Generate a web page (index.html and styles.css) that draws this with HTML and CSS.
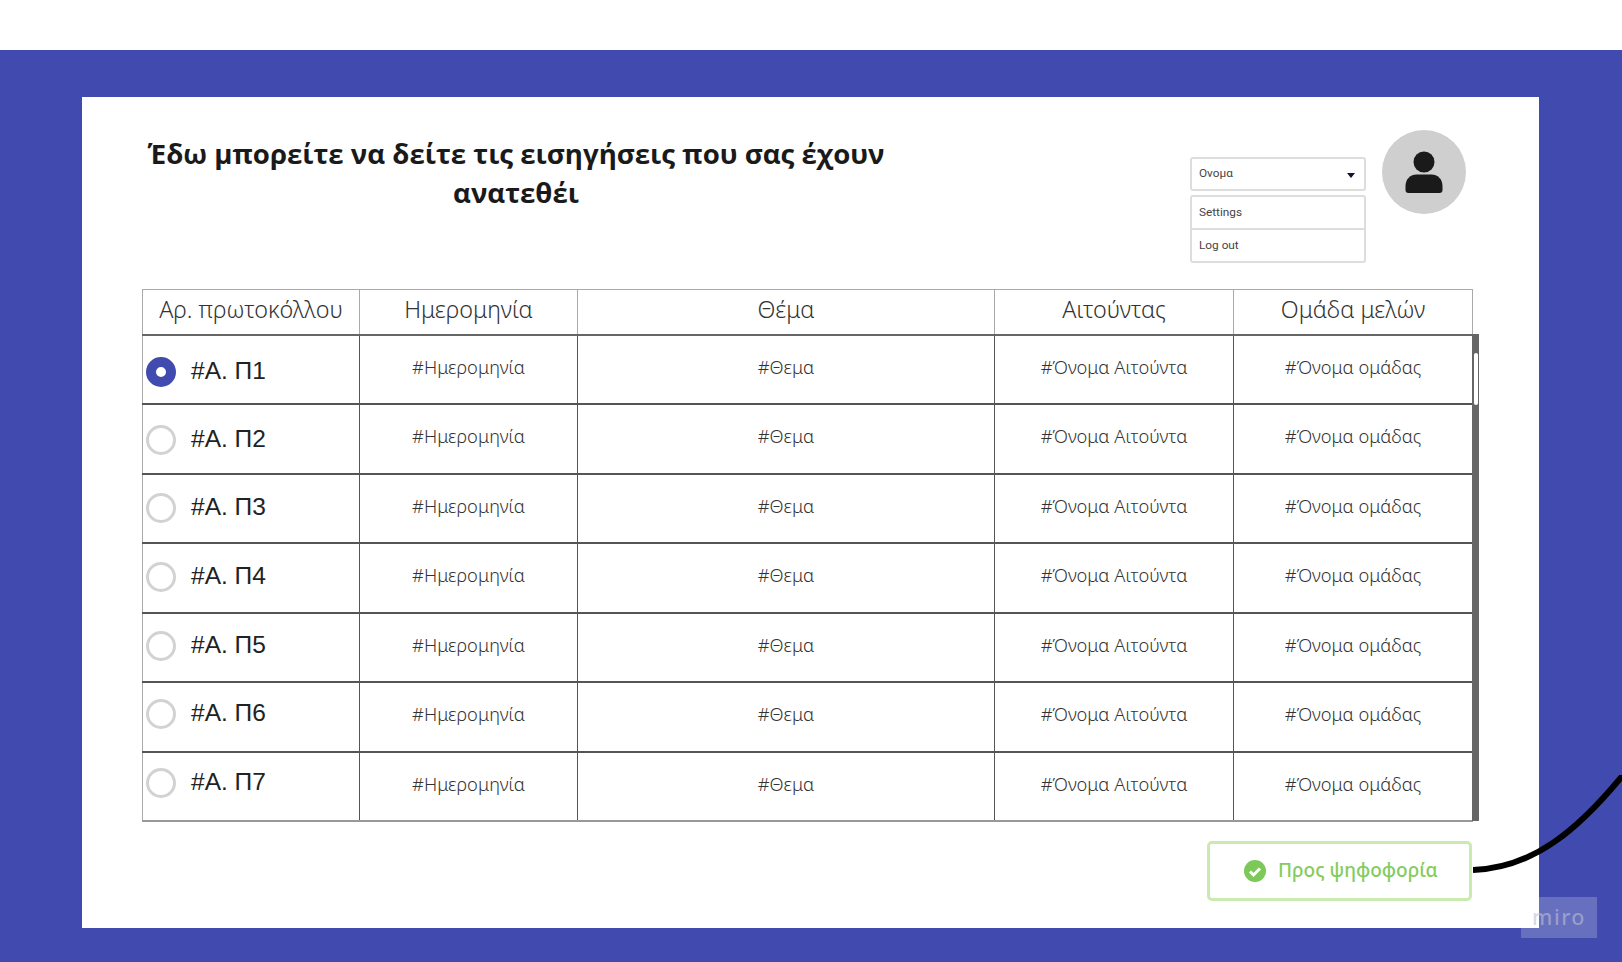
FILE: index.html
```html
<!DOCTYPE html>
<html lang="el">
<head>
<meta charset="utf-8">
<title>Εισηγήσεις</title>
<link rel="stylesheet" href="styles.css">
</head>
<body>
<div class="stage">
  <div class="panel">
    <div class="top">
      <h1 class="title">Έδω μπορείτε να δείτε τις εισηγήσεις που σας έχουν ανατεθέι</h1>
      <div class="account">
        <div class="menu">
          <div class="select"><span>Ονομα</span><i class="caret"></i></div>
          <div class="options">
            <div class="option">Settings</div>
            <div class="option">Log out</div>
          </div>
        </div>
        <div class="avatar">
          <svg width="40" height="84" viewBox="0 0 40 84">
            <circle cx="20" cy="32" r="10.5" fill="#1a1a1a"/>
            <path d="M1.500 60v-4c0-7 5-11.500 11-11.500h15c6 0 11 4.500 11 11.500v4c0 2-1 3-3 3H4.500c-2 0-3-1-3-3z" fill="#1a1a1a"/>
          </svg>
        </div>
      </div>
    </div>

    <div class="tablewrap">
      <table class="grid">
        <colgroup><col class="c1"><col class="c2"><col class="c3"><col class="c4"><col class="c5"></colgroup>
        <thead>
          <tr><th>Αρ. πρωτοκόλλου</th><th>Ημερομηνία</th><th>Θέμα</th><th>Αιτούντας</th><th>Ομάδα μελών</th></tr>
        </thead>
        <tbody>
          <tr><td class="first"><span class="radio on"></span>#Α. Π1</td><td>#Ημερομηνία</td><td>#Θεμα</td><td>#Όνομα Αιτούντα</td><td>#Όνομα ομάδας</td></tr>
          <tr><td class="first"><span class="radio"></span>#Α. Π2</td><td>#Ημερομηνία</td><td>#Θεμα</td><td>#Όνομα Αιτούντα</td><td>#Όνομα ομάδας</td></tr>
          <tr><td class="first"><span class="radio"></span>#Α. Π3</td><td>#Ημερομηνία</td><td>#Θεμα</td><td>#Όνομα Αιτούντα</td><td>#Όνομα ομάδας</td></tr>
          <tr><td class="first"><span class="radio"></span>#Α. Π4</td><td>#Ημερομηνία</td><td>#Θεμα</td><td>#Όνομα Αιτούντα</td><td>#Όνομα ομάδας</td></tr>
          <tr><td class="first"><span class="radio"></span>#Α. Π5</td><td>#Ημερομηνία</td><td>#Θεμα</td><td>#Όνομα Αιτούντα</td><td>#Όνομα ομάδας</td></tr>
          <tr><td class="first"><span class="radio"></span>#Α. Π6</td><td>#Ημερομηνία</td><td>#Θεμα</td><td>#Όνομα Αιτούντα</td><td>#Όνομα ομάδας</td></tr>
          <tr><td class="first"><span class="radio"></span>#Α. Π7</td><td>#Ημερομηνία</td><td>#Θεμα</td><td>#Όνομα Αιτούντα</td><td>#Όνομα ομάδας</td></tr>
        </tbody>
      </table>
      <div class="scrollbar"><div class="thumb"></div></div>
    </div>

    <div class="actions">
      <button class="vote">
        <svg width="22" height="22" viewBox="0 0 22 22">
          <circle cx="11" cy="11" r="11" fill="#7cc95a"/>
          <path d="M6 11.500l3.500 3.500L16 8.500" fill="none" stroke="#fff" stroke-width="3"/>
        </svg>
        <span class="vote-label">Προς ψηφοφορία</span>
      </button>
    </div>
  </div>

  <svg class="curve" width="150" height="100" viewBox="0 0 150 100">
    <path d="M0 95C60 93 105 55 150 0" fill="none" stroke="#000" stroke-width="6"/>
  </svg>
  <div class="miro">miro</div>
</div>
</body>
</html>
```

FILE: styles.css
```css
html, body { margin: 0; padding: 0; }
body {
  width: 1622px;
  height: 962px;
  overflow: hidden;
  background: #fff;
  font-family: "Noto Sans", sans-serif;
  color: #333;
}

.stage {
  position: relative;
  margin-top: 50px;
  height: 912px;
  padding: 47px 83px 0 82px;
  box-sizing: border-box;
  background: #414baf;
}

.panel {
  height: 831px;
  padding: 0 67px 0 60px;
  box-sizing: border-box;
  background: #fff;
}

.top {
  display: flex;
  justify-content: space-between;
  height: 192px;
}
.title {
  width: 748px;
  margin: 37px 0 0;
  font-family: "Open Sans", sans-serif;
  font-size: 27.600px;
  font-weight: 700;
  line-height: 39px;
  text-align: center;
  color: #1a1a1a;
}

.account { display: flex; gap: 16px; margin: 33px 6px 0 0; align-items: flex-start; }
.menu {
  width: 176px;
  margin-top: 27px;
  font-family: Roboto, sans-serif;
  font-size: 11.800px;
  color: #444;
}
.select, .options {
  border: 2px solid #ddd;
  border-radius: 3px;
  box-sizing: border-box;
}
.select {
  display: flex;
  justify-content: space-between;
  align-items: center;
  height: 34px;
  padding: 0 9px 2px 7px;
  margin-bottom: 4px;
}
.caret {
  width: 0;
  height: 0;
  margin-top: 4px;
  border-left: 4px solid transparent;
  border-right: 4px solid transparent;
  border-top: 5px solid #111133;
}
.option { height: 31px; line-height: 31px; padding-left: 7px; }
.option + .option { border-top: 2px solid #ddd; }
.avatar {
  display: flex;
  justify-content: center;
  width: 84px;
  height: 84px;
  border-radius: 50%;
  background: #cfcfcf;
}

.tablewrap { display: flex; align-items: flex-start; }
.grid {
  flex: none;
  width: 1331px;
  table-layout: fixed;
  border-collapse: collapse;
  margin-right: -1px;
}
.c1 { width: 217px; }
.c2 { width: 218px; }
.c3 { width: 417px; }
.c4 { width: 239px; }
.c5 { width: 239px; }
.grid th {
  height: 45px;
  padding: 0 0 6px;
  box-sizing: border-box;
  border: 1px solid #aaa;
  border-bottom: 2px solid #666;
  font-size: 23.300px;
  font-weight: 300;
  color: #333;
  text-align: center;
}
.grid td {
  height: 69.500px;
  padding: 0 0 6px;
  box-sizing: border-box;
  border: 1px solid #555;
  border-top-width: 2px;
  font-size: 18.300px;
  font-weight: 300;
  text-align: center;
}
.grid tbody tr:last-child td { border-bottom: 2px solid #999; }
.grid td:first-child { border-left: 1px solid #aaa; }
.grid td.first {
  padding: 0 0 0 2.500px;
  font-family: "Liberation Sans", sans-serif;
  font-size: 24.500px;
  font-weight: 400;
  color: #222;
  text-align: left;
}
/* the first column drifts up a little from row to row in the mockup */
.grid tr:nth-child(1) td.first { padding-top: 7px; }
.grid tr:nth-child(2) td.first { padding-top: 5px; }
.grid tr:nth-child(3) td.first { padding-top: 2px; }
.grid tr:nth-child(6) td.first { padding-bottom: 3px; }
.grid tr:nth-child(7) td.first { padding-bottom: 5px; }
.radio {
  display: inline-block;
  width: 30px;
  height: 30px;
  margin: 0 15.500px 2px 0;
  border: 3px solid #d2d2d2;
  border-radius: 50%;
  box-sizing: border-box;
  vertical-align: middle;
}
.radio.on { border: 10px solid #414baf; }

.scrollbar {
  flex: none;
  width: 7px;
  height: 487px;
  margin-top: 45px;
  padding-top: 19px;
  box-sizing: border-box;
  background: #666;
}
.thumb {
  width: 4px;
  height: 52px;
  margin-left: 2px;
  border-radius: 2px;
  background: #fff;
}

.actions { display: flex; justify-content: flex-end; margin-top: 19px; }
.vote {
  display: flex;
  align-items: center;
  gap: 12px;
  width: 265px;
  height: 60px;
  padding: 0 0 0 34px;
  box-sizing: border-box;
  background: #fff;
  border: 3px solid #cbeab2;
  border-radius: 5px;
  font-family: "Noto Sans", sans-serif;
  font-size: 19px;
  font-weight: 500;
  color: #84cc5c;
}
.vote-label { padding-bottom: 3px; }

.curve { position: absolute; left: 1473px; top: 725px; }
.miro {
  position: absolute;
  left: 1521px;
  top: 847px;
  width: 76px;
  height: 41px;
  background: rgba(255,255,255,.2);
  font-family: "Noto Sans", sans-serif;
  font-size: 21.500px;
  font-weight: 500;
  line-height: 39px;
  letter-spacing: 1.500px;
  text-align: center;
  color: rgba(190,190,210,.6);
}
```
